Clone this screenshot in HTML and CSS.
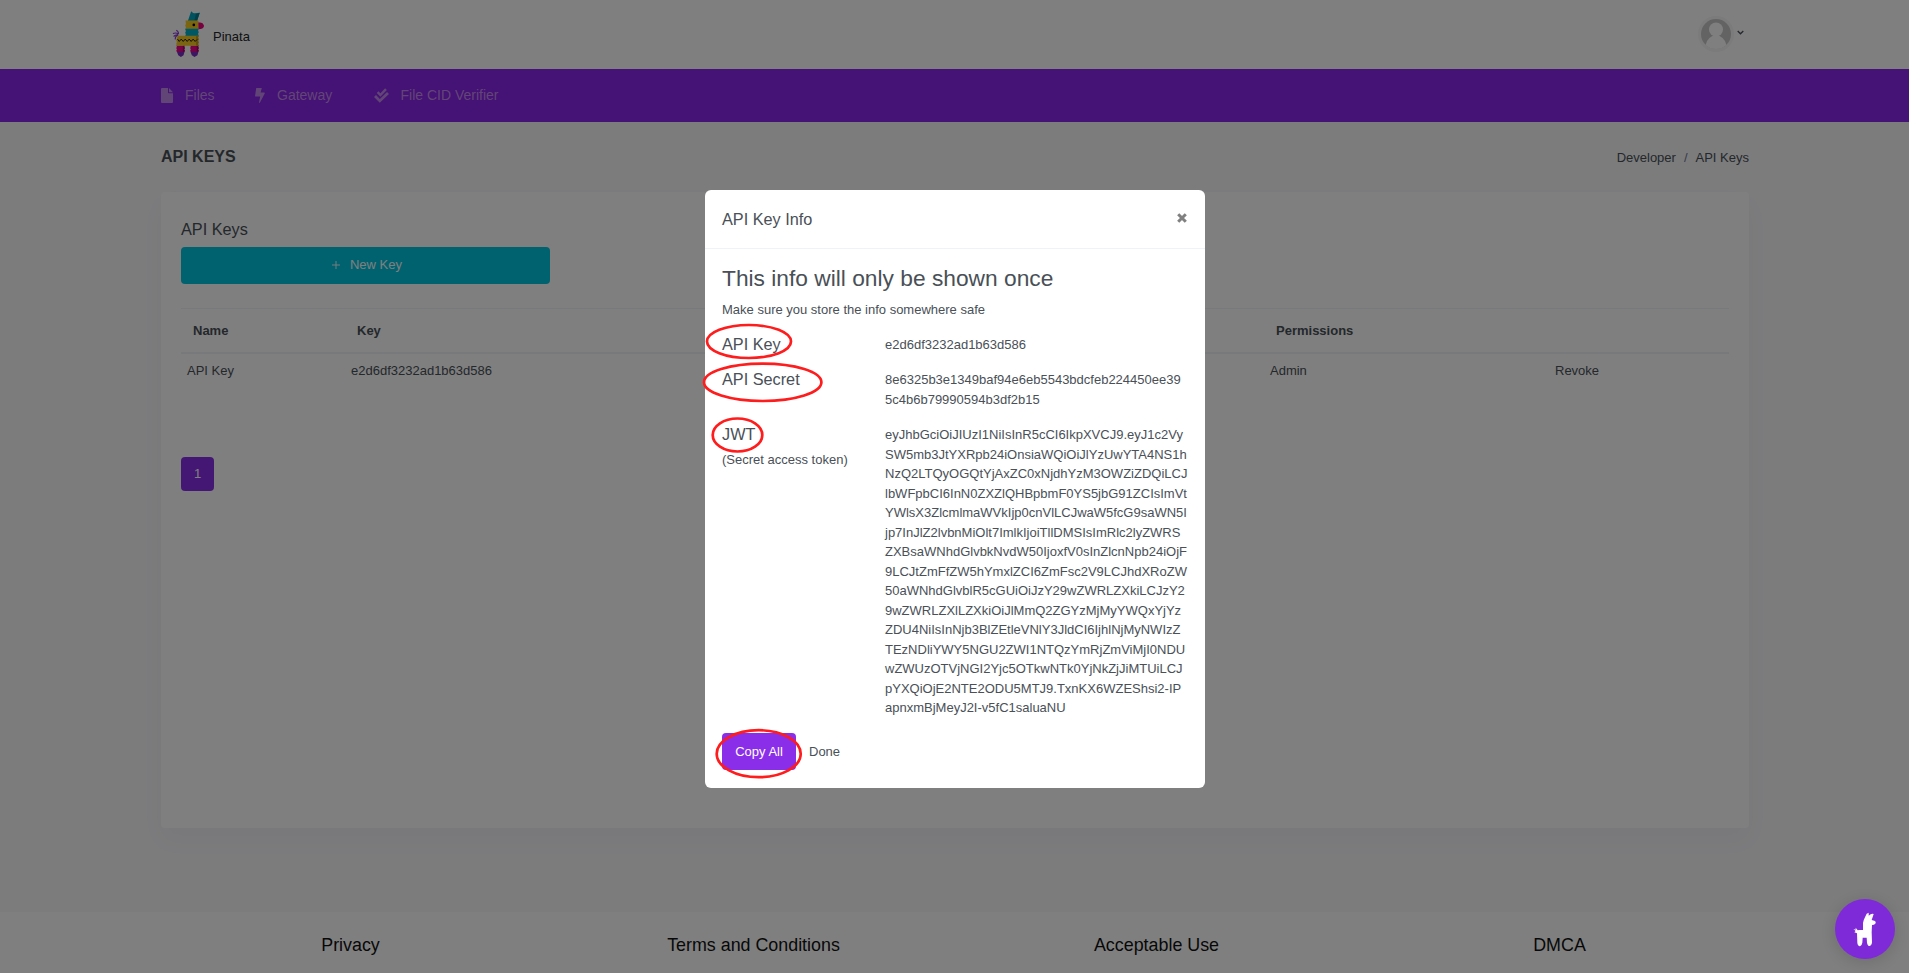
FILE: index.html
```html
<!DOCTYPE html>
<html lang="en">
<head>
<meta charset="utf-8">
<title>API Keys | Pinata</title>
<link rel="stylesheet" href="styles.css">
</head>
<body>
<div class="page">
  <header class="topbar">
    <div class="container topbar-inner">
      <a class="brand">
        <svg class="brand-logo" viewBox="60 30 110 145">
          <path d="M75 119q-1-10 9-13M85 103q0-9-7-12M84 103q-6-6-16-2M83 105q-7-1-13 5" fill="none" stroke="#8a3cd8" stroke-width="3.500"/>
          <path d="M78 137h26l-2 4 2 4-2 4 2 4-2 4H80l-2-4 2-4-2-4 2-4zM120 137h26l-2 4 2 4-2 4 2 4-2 4h-22l-2-4 2-4-2-4 2-4z" fill="#f00088"/>
          <path d="M98 137h6l-2 4 2 4-2 4 2 4-2 4h-4zM140 137h6l-2 4 2 4-2 4 2 4-2 4h-4z" fill="#a80068"/>
          <path d="M80 156h23l-3 11-8 5-8-5zM121 156h24l-3 11-9 5-8-5z" fill="#7a2cc4"/>
          <path d="M112 66l11-32 6 5 4 1 16-2-9 28z" fill="#00a7bd"/>
          <path d="M133 60l4-17 12-5-9 27z" fill="#007c90"/>
          <path d="M106 62h38l3 8-2 18h-39l1-6-2-5 2-5z" fill="#f7cb22"/>
          <path d="M145 68q14-2 17 10-2 10-17 10z" fill="#f0007e"/>
          <circle cx="131" cy="75" r="4" fill="#000"/>
          <path d="M105 87h41l-2 5 2 5-2 5 2 7h-41l2-6-2-4 2-5z" fill="#00b0c8"/>
          <path d="M82 108h64l-2 5 2 5-2 5 2 5-2 5 2 5H80l-2-5 2-6-2-5 2-6z" fill="#f7cb22"/>
          <path d="M138 108h8l-2 5 2 5-2 5 2 5-2 5 2 5h-8z" fill="#c99f10"/>
          <path d="M82 118l5 7 6-7 6 7 6-7 6 7 6-7 6 7 6-7 6 7 6-6" fill="none" stroke="#111" stroke-width="3"/>
        </svg>
        <span>Pinata</span>
      </a>
      <div class="user">
        <svg class="avatar" viewBox="0 0 36 36">
          <circle cx="18" cy="18" r="18" fill="#f6f6f8"/>
          <circle cx="18" cy="18" r="15" fill="#c6c6c6"/>
          <circle cx="18" cy="13.500" r="7" fill="#fff"/>
          <path d="M7.600 29Q10 19.500 18 19.500T28.400 29Q24 33 18 33T7.600 29z" fill="#fff"/>
        </svg>
        <svg class="chevron" viewBox="0 0 7 5"><path d="M.7 1l2.800 2.800L6.300 1" fill="none" stroke="#495057" stroke-width="1.300"/></svg>
      </div>
    </div>
  </header>
  <nav class="nav">
    <div class="container nav-inner">
      <a class="nav-item files">
        <svg viewBox="0 0 12 15"><path d="M1 0h6v4.500q0 .7.7.7H12V14q0 1-1 1H1q-1 0-1-1V1q0-1 1-1z"/><path d="M8 0l4 4.200H8z"/></svg>
        <span>Files</span></a>
      <a class="nav-item gateway">
        <svg viewBox="0 0 10 15"><path d="M1.200 0h5.600L5.600 4.600h3.700q.8.200.4 1L5 14.600q-.8.800-1 0L5.200 8.600H.8Q0 8.500.1 7.800z"/></svg>
        <span>Gateway</span></a>
      <a class="nav-item verifier">
        <svg viewBox="0 0 15 15"><path d="M3.600 4.200l2.800 2.900L12 1.200" fill="none" stroke="currentColor" stroke-width="2.400"/><path d="M1 8l4.800 4.900L14 5" fill="none" stroke="currentColor" stroke-width="2.800"/></svg>
        <span>File CID Verifier</span></a>
    </div>
  </nav>
  <main class="container main">
    <div class="title-row">
      <h1>API KEYS</h1>
      <div class="crumbs"><span>Developer</span><span class="slash">/</span><span>API Keys</span></div>
    </div>
    <section class="card">
      <h2>API Keys</h2>
      <button class="btn-new"><svg viewBox="0 0 8 8"><path d="M4 0v8M0 4h8" stroke="#fff" stroke-width=".9"/></svg>New Key</button>
      <div class="table">
        <div class="row head"><span>Name</span><span>Key</span><span>Permissions</span><span></span></div>
        <div class="row"><span>API Key</span><span>e2d6df3232ad1b63d586</span><span>Admin</span><span>Revoke</span></div>
      </div>
      <button class="page-num">1</button>
    </section>
  </main>
  <footer class="footer"><a>Privacy</a><a>Terms and Conditions</a><a>Acceptable Use</a><a>DMCA</a></footer>
</div>

<div class="backdrop">
  <div class="modal">
    <div class="modal-head">
      <h3>API Key Info</h3>
      <svg class="close" viewBox="0 0 10 10"><path d="M1.200 1.200l7.600 7.600M8.800 1.200L1.200 8.800" stroke="#808080" stroke-width="3"/></svg>
    </div>
    <div class="modal-body">
      <h4>This info will only be shown once</h4>
      <p class="note">Make sure you store the info somewhere safe</p>
      <dl class="info">
        <dt>API Key</dt>
        <dd>e2d6df3232ad1b63d586</dd>
        <dt>API Secret</dt>
        <dd>8e6325b3e1349baf94e6eb5543bdcfeb224450ee39<br>5c4b6b79990594b3df2b15</dd>
        <dt>JWT<small>(Secret access token)</small></dt>
        <dd>eyJhbGciOiJIUzI1NiIsInR5cCI6IkpXVCJ9.eyJ1c2Vy<br>SW5mb3JtYXRpb24iOnsiaWQiOiJlYzUwYTA4NS1h<br>NzQ2LTQyOGQtYjAxZC0xNjdhYzM3OWZiZDQiLCJ<br>lbWFpbCI6InN0ZXZlQHBpbmF0YS5jbG91ZCIsImVt<br>YWlsX3ZlcmlmaWVkIjp0cnVlLCJwaW5fcG9saWN5I<br>jp7InJlZ2lvbnMiOlt7ImlkIjoiTllDMSIsImRlc2lyZWRS<br>ZXBsaWNhdGlvbkNvdW50IjoxfV0sInZlcnNpb24iOjF<br>9LCJtZmFfZW5hYmxlZCI6ZmFsc2V9LCJhdXRoZW<br>50aWNhdGlvblR5cGUiOiJzY29wZWRLZXkiLCJzY2<br>9wZWRLZXlLZXkiOiJlMmQ2ZGYzMjMyYWQxYjYz<br>ZDU4NiIsInNjb3BlZEtleVNlY3JldCI6IjhlNjMyNWIzZ<br>TEzNDliYWY5NGU2ZWI1NTQzYmRjZmViMjI0NDU<br>wZWUzOTVjNGI2Yjc5OTkwNTk0YjNkZjJiMTUiLCJ<br>pYXQiOjE2NTE2ODU5MTJ9.TxnKX6WZEShsi2-IP<br>apnxmBjMeyJ2I-v5fC1saluaNU</dd>
      </dl>
      <div class="actions"><button class="btn-copy">Copy All</button><button class="btn-done">Done</button></div>
    </div>
    <svg class="marks" viewBox="0 0 520 598">
      <ellipse cx="54" cy="151.500" rx="42" ry="16.500"/>
      <ellipse cx="67.700" cy="192.300" rx="58.700" ry="18.700"/>
      <ellipse cx="42.500" cy="245" rx="24.800" ry="16.500"/>
      <ellipse cx="63.700" cy="563.700" rx="42" ry="23.500"/>
    </svg>
  </div>
</div>
<div class="chat">
  <svg viewBox="278 335 72 105"><path d="M308 368q2-10 6-17l5-11 6-3v9l6-4q5-3 9-1l-6 18 10 3q4 3 1 8-4 4-10 4l-1 22 1 30q-1 10-7 11-6 0-8-10l-1-15h-12l-1 15q-2 10-7 11-7-1-8-11l-1-28-8-3 4-4-7-6 7 2 0-6 6 8 5-1h11z" fill="#fff"/></svg>
</div>
</body>
</html>
```
FILE: styles.css
```css
* { box-sizing: border-box; }
body {
  margin: 0;
  height: 973px;
  overflow: hidden;
  font: 13px/19.5px "Liberation Sans", Arial, sans-serif;
  color: #495057;
  background: #f8f8fb;
}
h1, h2, h3, h4, p, dl, dd { margin: 0; font-weight: 400; }
button { border: 0; font: inherit; border-radius: 4px; }
.page { display: flex; flex-direction: column; height: 973px; }
.container { width: 1588px; margin: 0 0 0 161px; }

.topbar { height: 69px; background: #fff; }
.topbar-inner { display: flex; justify-content: space-between; padding: 10px 5px 0 9px; }
.brand { display: flex; gap: 6px; color: #212529; }
.brand-logo { width: 37px; height: 48px; }
.brand span { padding-top: 17px; }
.user { display: flex; gap: 3px; padding-top: 6px; }
.avatar { width: 36px; height: 36px; }
.chevron { width: 7px; height: 5px; margin-top: 14px; }

.nav { height: 53px; background: #8a24ea; }
.nav-inner { display: flex; height: 100%; align-items: center; padding-bottom: 1px; font-size: 14px; }
.nav-item { display: flex; align-items: center; color: #c48bee; }
.nav-item svg { fill: currentColor; height: 15px; }
.nav-item span { padding-top: 2px; }
.files { width: 94px; gap: 12px; }
.files svg { width: 12px; }
.gateway { width: 118.500px; gap: 12px; }
.gateway svg { width: 10px; }
.verifier { gap: 12px; }
.verifier svg { width: 15px; }

.main { flex: 1; }
.title-row { display: flex; justify-content: space-between; align-items: center; height: 70px; }
.title-row h1 { font-size: 16px; font-weight: 700; }
.crumbs { display: flex; gap: 8px; padding: 1px 0 0; }
.crumbs .slash { color: #74788d; }
.card {
  height: 636px;
  padding: 27px 20px 0;
  background: #fff;
  border-radius: 4px;
  box-shadow: 0 12px 24px rgba(18, 38, 63, .03);
}
.card h2 { font-size: 16.250px; height: 28px; line-height: 20px; }
.btn-new {
  display: flex;
  align-items: center;
  justify-content: center;
  gap: 10px;
  width: 369px;
  height: 37px;
  padding: 0 4px 1px 7px;
  color: #fff;
  background: #00c4de;
}
.btn-new svg { width: 8px; height: 8px; }
.table { margin-top: 24px; border-top: 1px solid #eff2f7; }
.row {
  display: grid;
  grid-template-columns: 164px 919px 285px 1fr;
  height: 33px;
  align-items: center;
  padding-left: 6px;
}
.head { height: 45px; padding-left: 12px; font-weight: 700; border-bottom: 2px solid #eff2f7; }
.page-num {
  display: block;
  width: 33px;
  height: 34px;
  margin-top: 70px;
  padding: 0 0 1px;
  color: #fff;
  background: #8a2eea;
}
.footer {
  display: grid;
  grid-template-columns: repeat(4, 403px);
  margin-top: 0;
  padding: 22px 0 0 149px;
  height: 61px;
  background: #fff;
  color: #111;
  font-size: 17.875px;
  line-height: 22px;
  text-align: center;
}

.backdrop {
  position: fixed;
  inset: 0;
  display: flex;
  align-items: flex-start;
  padding: 190px 0 0 705px;
  background: rgba(0, 0, 0, .5);
}
.modal {
  position: relative;
  width: 500px;
  height: 598px;
  background: #fff;
  border-radius: 6px;
}
.modal-head {
  display: flex;
  justify-content: space-between;
  height: 59px;
  padding: 18px 18px 0 17px;
  border-bottom: 1px solid #eff2f7;
}
.modal-head h3 { font-size: 16.250px; line-height: 22px; }
.close { width: 10px; height: 10px; margin-top: 5px; }
.modal-body { padding: 15px 17px 0; }
.modal-body h4 { font-size: 22.750px; line-height: 28px; }
.note { margin-top: 8px; }
.info {
  display: grid;
  grid-template-columns: 163px 1fr;
  row-gap: 16px;
  margin-top: 15px;
}
.info dt { margin-top: -1px; font-size: 16.250px; line-height: 20px; }
.info dt small { display: block; margin-top: 6px; font-size: 13px; line-height: 19.500px; }
.info dd { white-space: nowrap; }
.actions { display: flex; margin-top: 15.500px; }
.btn-copy { width: 74px; height: 37px; padding: 0; color: #fff; background: #8a2eea; }
.btn-done { height: 37px; padding: 0 13px; color: #495057; background: none; }
.marks {
  position: absolute;
  left: -10px;
  top: 0;
  width: 520px;
  height: 598px;
  overflow: visible;
  fill: none;
  stroke: #ff1c1c;
  stroke-width: 2.700px;
}
.chat {
  position: fixed;
  left: 1835px;
  top: 899px;
  display: flex;
  align-items: center;
  justify-content: center;
  width: 60px;
  height: 60px;
  border-radius: 50%;
  background: #7f2ad8;
  box-shadow: 0 3px 18px rgba(0, 0, 0, .15);
}
.chat svg { width: 24px; height: 35px; }
```
